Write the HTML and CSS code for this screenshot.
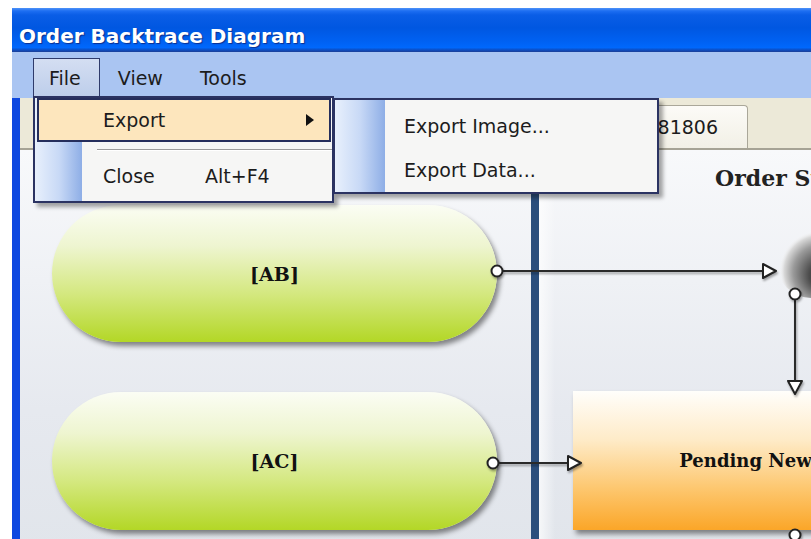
FILE: index.html
```html
<!DOCTYPE html>
<html lang="en">
<head>
    <meta charset="UTF-8">
    <meta name="viewport" content="width=device-width, initial-scale=1.0">
    <title>Order Backtrace Diagram</title>
    <link rel="stylesheet" href="styles.css">
</head>
<body>

    <div class="window">
        <div class="titlebar">Order Backtrace Diagram</div>

        <!-- Menu bar -->
        <div class="menubar">
            <div class="menu-item open">File</div>
            <div class="menu-item">View</div>
            <div class="menu-item">Tools</div>
        </div>

        <div class="frame">
            <div class="client">
                <div class="tabstrip">
                    <div class="tab">Order 20081806</div>
                </div>

                <!-- Diagram canvas -->
                <div class="canvas">
                    <div class="lane-glow"></div>
                    <div class="lane-divider"></div>
                    <div class="diagram-title">Order Status</div>

                    <div class="node pill node-ab">[AB]</div>
                    <div class="node pill node-ac">[AC]</div>
                    <div class="node state node-pending">Pending New</div>

                    <svg class="wires" width="800" height="400" viewBox="0 0 800 400">
                        <defs>
                            <filter id="sh" x="-30%" y="-30%" width="160%" height="160%">
                                <feDropShadow dx="1" dy="2" stdDeviation="1.2" flood-color="#000" flood-opacity="0.35"/>
                            </filter>
                            <radialGradient id="ball" cx="0.6" cy="0.62" r="0.55" fx="0.68" fy="0.72">
                                <stop offset="0" stop-color="#2a2a2a"/>
                                <stop offset="0.35" stop-color="#4c4c4c"/>
                                <stop offset="0.7" stop-color="#9a9a9a"/>
                                <stop offset="0.9" stop-color="#d8d8d8"/>
                                <stop offset="1" stop-color="#f2f2f2" stop-opacity="0"/>
                            </radialGradient>
                        </defs>
                        <circle cx="792" cy="112" r="36" fill="url(#ball)"/>
                        <g filter="url(#sh)" stroke="#2a2a2a" stroke-width="2" fill="none">
                            <path d="M483 121 H743"/>
                            <path d="M775 150 V231"/>
                            <path d="M479 313 H548"/>
                        </g>
                        <g filter="url(#sh)" fill="#fff" stroke="#222" stroke-width="2" stroke-linejoin="round">
                            <path d="M743 114 L756 121 L743 128 Z"/>
                            <path d="M768 231 L782 231 L775 244 Z"/>
                            <path d="M548 306 L561 313 L548 320 Z"/>
                            <circle cx="477" cy="121" r="5.5"/>
                            <circle cx="775" cy="144" r="5.5"/>
                            <circle cx="473" cy="313" r="5.5"/>
                            <circle cx="775" cy="385" r="5.5"/>
                        </g>
                    </svg>
                </div>
            </div>
        </div>

        <!-- File menu, opened -->
        <div class="dropdown">
            <div class="dd-item active">
                <span class="label">Export</span>
                <span class="arrow"></span>
            </div>
            <div class="separator"></div>
            <div class="dd-item tall">
                <span class="label">Close</span>
                <span class="shortcut">Alt+F4</span>
            </div>
        </div>

        <!-- Export submenu -->
        <div class="submenu">
            <div class="sub-item">Export Image...</div>
            <div class="sub-item">Export Data...</div>
        </div>
    </div>

</body>
</html>
```

FILE: styles.css
```css
html, body {
    margin: 0;
    overflow: hidden;
}
body {
    width: 811px;
    height: 539px;
    background-color: #fff;
    font-family: "DejaVu Sans", Verdana, sans-serif;
    font-size: 19px;
    color: #1c1c1c;
}
.window {
    position: relative;
    margin: 8px 0 0 12px;
    width: 812px;
}
.titlebar {
    height: 44px;
    box-sizing: border-box;
    padding: 16px 0 0 7px;
    line-height: 24px;
    font-size: 20px;
    font-weight: bold;
    color: #fff;
    text-shadow: 1px 1px 1px #0b2f8e;
    background: linear-gradient(#4d92f8 0, #1d6ef2 3px, #0a5de6 7px, #0057e1 45%, #0062f4 78%, #0068fc 90%, #0c4fc6 95%, #1d3f96 100%);
}
.menubar {
    display: flex;
    gap: 2px;
    height: 46px;
    box-sizing: border-box;
    padding: 6px 0 0 21px;
    background-color: #aac5f2;
}
.menu-item {
    padding: 9px 19px 0 16px;
    line-height: 22px;
}
.menu-item.open {
    padding: 8px 18px 0 15px;
    border: 1px solid #2f3b6b;
    border-bottom: none;
    background: linear-gradient(#d4def2, #bccdea);
}
.frame {
    display: flex;
    border-left: 8px solid #0d47e0;
}
.client {
    flex: 1;
}
.tabstrip {
    display: flex;
    justify-content: flex-end;
    align-items: flex-end;
    height: 50px;
    padding-right: 76px;
    background-color: #ece9d8;
    border-bottom: 2px solid #a6a395;
}
.tab {
    height: 43px;
    box-sizing: border-box;
    padding: 0 29px 0 16px;
    line-height: 42px;
    border: 1px solid #aaa799;
    border-bottom: none;
    border-radius: 4px 4px 0 0;
    background: linear-gradient(#fcfbf7, #f2f0e6);
}
.canvas {
    position: relative;
    height: 400px;
    background: linear-gradient(#f8f9fb, #e6e9ef 65%, #e1e5eb);
}
.lane-divider {
    position: absolute;
    left: 511px;
    top: 0;
    bottom: 0;
    width: 8px;
    background-color: #2b4e7c;
}
.lane-glow {
    position: absolute;
    left: 519px;
    top: 0;
    bottom: 0;
    width: 16px;
    background: linear-gradient(90deg, rgba(255, 255, 255, 0.7), rgba(255, 255, 255, 0));
}
.diagram-title {
    position: absolute;
    left: 695px;
    top: 14px;
    white-space: nowrap;
    line-height: 28px;
    font-family: "DejaVu Serif", "Liberation Serif", serif;
    font-size: 22px;
    font-weight: bold;
    color: #222;
}
.node {
    position: absolute;
    display: flex;
    align-items: center;
    justify-content: center;
    white-space: nowrap;
    font-family: "DejaVu Serif", "Liberation Serif", serif;
    font-weight: bold;
    color: #111;
    box-shadow: 3px 4px 5px rgba(0, 0, 0, 0.45);
}
.pill {
    width: 445px;
    border-radius: 69px;
    font-size: 19px;
    background: linear-gradient(#fbfdf4 0%, #eef5d0 30%, #d4e87f 65%, #b3d726 100%);
}
.node-ab {
    left: 32px;
    top: 55px;
    height: 137px;
}
.node-ac {
    left: 32px;
    top: 242px;
    height: 138px;
}
.state {
    font-size: 18px;
    background: linear-gradient(#fffefb 0%, #feebc8 35%, #fdc76f 70%, #fba628 100%);
}
.node-pending {
    left: 553px;
    top: 241px;
    width: 345px;
    height: 139px;
}
.wires {
    position: absolute;
    left: 0;
    top: 0;
    overflow: visible;
}
.dropdown {
    position: absolute;
    left: 21px;
    top: 88px;
    width: 301px;
    box-sizing: border-box;
    border: 2px solid #2b3362;
    background: linear-gradient(90deg, #e8f0fc 0, #c8d9f6 24px, #8eaee6 47px, #f6f6f5 47px);
    box-shadow: 4px 4px 4px rgba(0, 0, 0, 0.35);
    z-index: 10;
}
.dd-item {
    display: flex;
    align-items: center;
    height: 44px;
    box-sizing: border-box;
    margin: 0 1px 0 2px;
    padding-left: 64px;
    border: 2px solid transparent;
}
.dd-item.active {
    background-color: #fde6bd;
    border-color: #252e5c;
}
.dd-item.tall {
    height: 50px;
}
.dd-item .label {
    width: 102px;
}
.arrow {
    margin-left: auto;
    margin-right: 15px;
    border-left: 8px solid #111;
    border-top: 6px solid transparent;
    border-bottom: 6px solid transparent;
}
.separator {
    margin: 7px 0 0 62px;
    height: 1px;
    background-color: #9c9c9c;
    border-bottom: 1px solid #fff;
}
.submenu {
    position: absolute;
    left: 321px;
    top: 90px;
    width: 326px;
    height: 96px;
    box-sizing: border-box;
    padding-top: 4px;
    border: 2px solid #2b3362;
    background: linear-gradient(90deg, #e8f0fc 0, #c8d9f6 25px, #8eaee6 50px, #f6f6f5 50px);
    box-shadow: 4px 4px 4px rgba(0, 0, 0, 0.35);
    z-index: 11;
}
.sub-item {
    height: 44px;
    line-height: 44px;
    padding-left: 69px;
}
```
